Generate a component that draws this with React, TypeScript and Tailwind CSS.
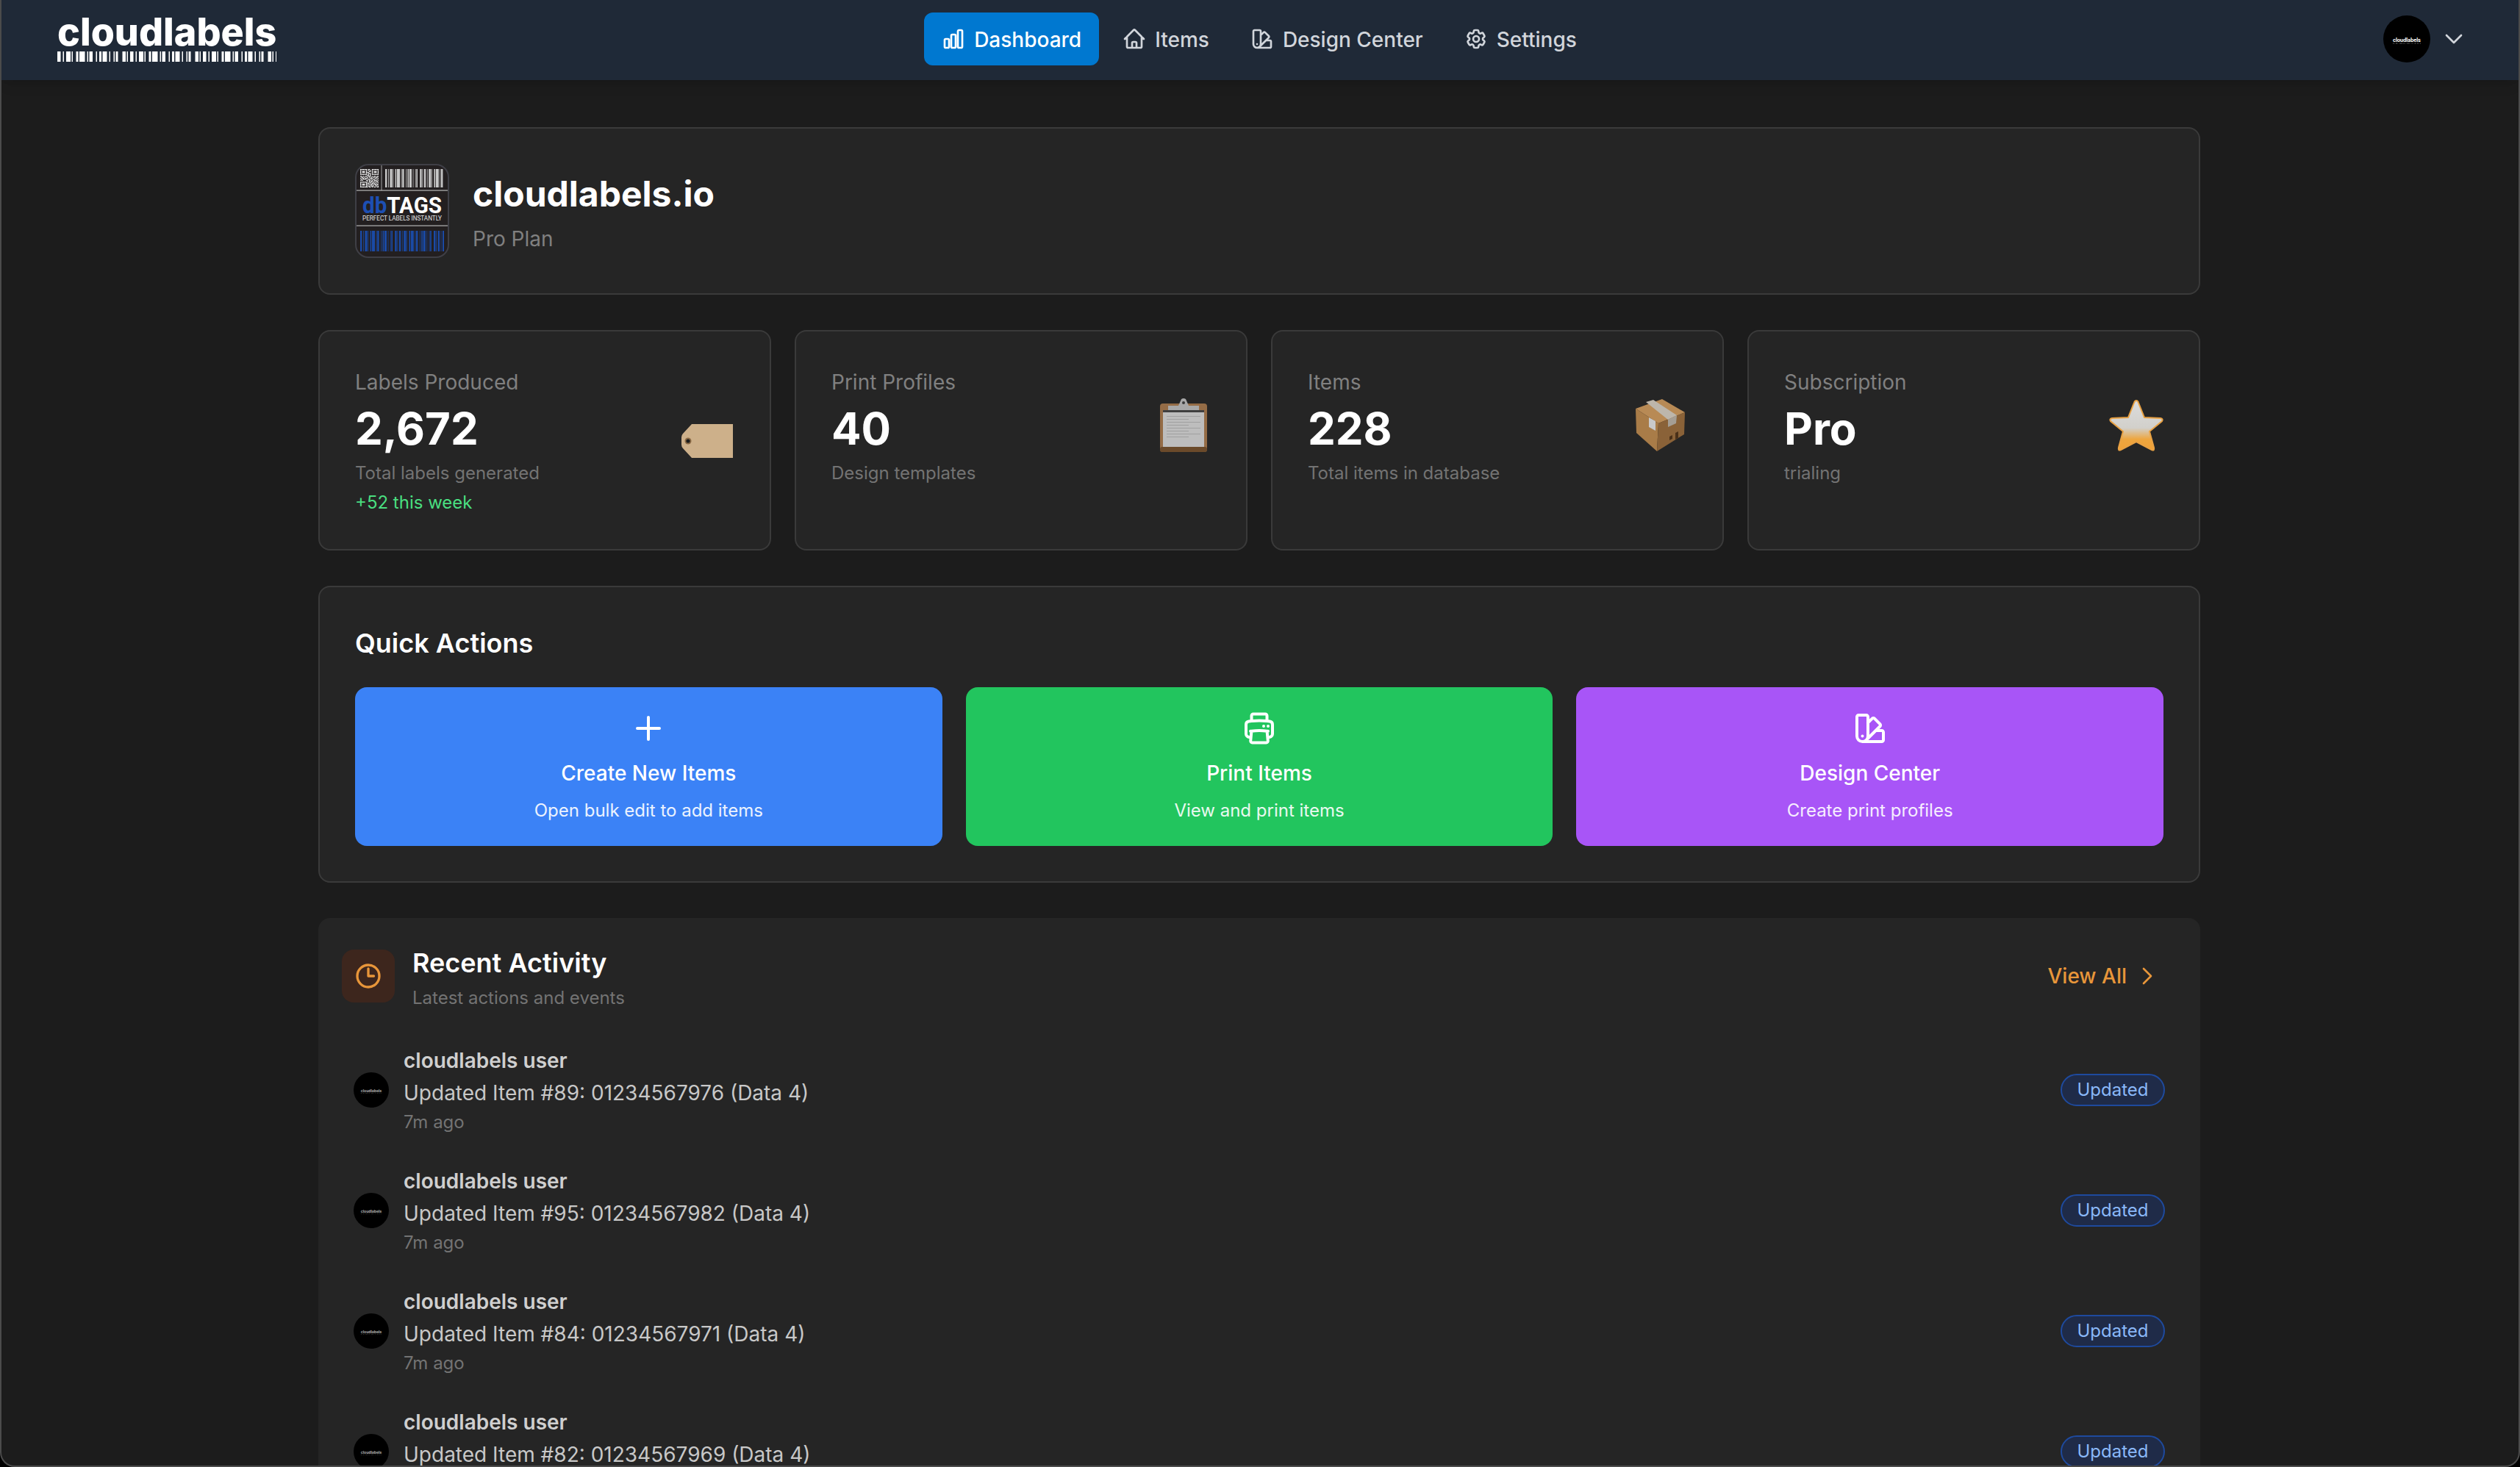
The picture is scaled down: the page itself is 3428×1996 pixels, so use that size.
import {
  HiOutlineChartBar,
  HiOutlineChevronDown,
  HiOutlineChevronRight,
  HiOutlineClock,
  HiOutlineCog6Tooth,
  HiOutlineHome,
  HiOutlinePlus,
  HiOutlinePrinter,
  HiOutlineSwatch,
} from "react-icons/hi2";

// fake barcode: repeats a fixed list of bar / gap widths across the given width
const barWidths = [3, 2, 1, 2, 4, 1, 1, 3, 2, 1, 5, 2, 1, 1, 3, 3, 1, 2, 2, 1, 4, 2, 1, 3, 1, 1, 2, 4, 3, 1, 1, 2];

const Bars = ({ x, y, width, height, fill, unit = 1 }: { x: number; y: number; width: number; height: number; fill: string; unit?: number }) => {
  const bars: { x: number; w: number }[] = [];
  let pos = 0;
  let i = 0;
  while (pos < width) {
    const w = barWidths[i % barWidths.length] * unit;
    if (i % 2 === 0) bars.push({ x: pos, w: Math.min(w, width - pos) });
    pos += w;
    i++;
  }
  return (
    <g fill={fill}>
      {bars.map((b, idx) => (
        <rect key={idx} x={x + b.x} y={y} width={b.w} height={height} />
      ))}
    </g>
  );
};

const qrRows = [
  "1111111011001111111",
  "1000001010101000001",
  "1011101001101011101",
  "1011101110001011101",
  "1000001011101000001",
  "1111111010101111111",
  "0000000110100000000",
  "1101011011101011011",
  "0110100101010110110",
  "1011011100111001101",
  "0101110011010110010",
  "1110001101101011101",
  "0000000101011010110",
  "1111111001110101011",
  "1000001110101110100",
  "1011101011011011011",
  "1011101100110101110",
  "1000001011011100101",
  "1111111101101011011",
];

const DbTagsLogo = () => (
  <svg viewBox="0 0 128 128" className="h-32 w-32 shrink-0">
    <rect x="1" y="1" width="126" height="126" rx="17" fill="#231f20" stroke="#3f3f46" strokeWidth="2" />
    {qrRows.map((row, r) =>
      row.split("").map((c, col) =>
        c === "1" ? <rect key={`${r}-${col}`} x={7 + col * 1.32} y={7 + r * 1.32} width="1.32" height="1.32" fill="#f2f2f2" /> : null
      )
    )}
    <rect x="35.5" y="2" width="1" height="34" fill="#a3a3a3" />
    <Bars x={41} y={7} width={80} height={25} fill="#c8c8c8" unit={0.8} />
    <rect x="2" y="35.5" width="124" height="1.2" fill="#b5b5b5" />
    <text x="10" y="67" fontFamily="Roboto, sans-serif" fontWeight="700" fontSize="31" textLength="108" lengthAdjust="spacingAndGlyphs">
      <tspan fill="#1d4fb3">db</tspan>
      <tspan fill="#ffffff">TAGS</tspan>
    </text>
    <text x="10" y="77" fontFamily="Roboto, sans-serif" fontSize="9.5" fill="#e5e5e5" textLength="108" lengthAdjust="spacingAndGlyphs">
      PERFECT LABELS INSTANTLY
    </text>
    <rect x="2" y="83.5" width="124" height="1.2" fill="#b5b5b5" />
    <Bars x={7} y={91} width={114} height={28} fill="#1a4aa6" unit={0.8} />
  </svg>
);

const Logo = () => (
  <div className="-ml-[2px] flex w-[298px] flex-col">
    <span className="text-[52px] leading-[44px] font-extrabold text-white">cloudlabels</span>
    <svg viewBox="0 0 298 14" className="mt-[4px] h-[14px] w-[298px]">
      <Bars x={0} y={0} width={298} height={14} fill="#ffffff" unit={1.5} />
    </svg>
  </div>
);

const Avatar = ({ size }: { size: "sm" | "lg" }) => (
  <svg viewBox="0 0 64 64" className={size === "lg" ? "h-16 w-16 shrink-0" : "h-12 w-12 shrink-0"}>
    <circle cx="32" cy="32" r="32" fill="#000000" />
    <text
      x="32"
      y="36"
      textAnchor="middle"
      fontFamily="Inter, sans-serif"
      fontWeight="700"
      fontSize="7"
      fill={size === "lg" ? "#ffffff" : "#a8a8a8"}
      textLength="38"
    >
      cloudlabels
    </text>
    <Bars x={13} y={37.5} width={38} height={1} fill={size === "lg" ? "#666666" : "#3a3a3a"} unit={0.5} />
  </svg>
);

const TagEmoji = () => (
  <svg viewBox="0 0 72 72" className="h-[72px] w-[72px] overflow-visible">
    <path d="M14 13 H70 V59 H14 L2 46 Q0 44 0 41 V31 Q0 28 2 26 Z" fill="#cdb08a" />
    <circle cx="9" cy="36" r="4.5" fill="#8a6a45" />
    <circle cx="9" cy="36" r="2.6" fill="#1c1c1c" />
  </svg>
);

const ClipboardEmoji = () => (
  <svg viewBox="0 0 72 72" className="h-[72px] w-[72px] overflow-visible">
    <rect x="3" y="5" width="64" height="66" rx="4" fill="#956c46" />
    <rect x="7" y="14" width="56" height="50" fill="#bdbdbd" />
    <rect x="7" y="14" width="56" height="3" fill="#3f3f3f" />
    <rect x="3" y="64" width="64" height="7" rx="3" fill="#6b4a2a" />
    <path d="M14 8 H28 L32 -1 Q35 -3 38 -1 L42 8 H56 V14 H14 Z" fill="#a8a8a8" />
    <circle cx="35" cy="4" r="2" fill="#3a3a3a" />
    {[22, 26, 30, 34, 38, 42, 46, 50].map((y) => (
      <rect key={y} x="12" y={y} width={y % 8 === 2 ? 30 : 46} height="1" fill="#a0a0a0" />
    ))}
  </svg>
);

const PackageEmoji = () => (
  <svg viewBox="0 0 72 72" className="h-[72px] w-[72px] overflow-visible">
    <path d="M38 -1 L69 17 L33 32 L2 12 Z" fill="#b88a55" />
    <path d="M2 12 L33 32 L31 70 L3 45 Z" fill="#a97c48" />
    <path d="M33 32 L69 17 L68 47 L31 70 Z" fill="#8a6238" />
    <path d="M16 3 L26 -0 L58 21 L46 27 Z" fill="#bdb6ab" />
    <path d="M46 27 L58 21 L57 32 L46 37 Z" fill="#a59e94" />
    <path d="M20 24 L29 29 L29 42 L20 37 Z" fill="#c9c9c9" />
    <path d="M48 50 L52 48 L52 53 L48 55 Z M56 45 L60 43 L60 52 L56 54 Z" fill="#4a3018" />
  </svg>
);

const StarEmoji = () => (
  <svg viewBox="0 0 72 72" className="h-[72px] w-[72px] overflow-visible">
    <defs>
      <linearGradient id="star-fill" x1="0" y1="0" x2="0" y2="1">
        <stop offset="0" stopColor="#dcdcdc" />
        <stop offset="0.55" stopColor="#d2d0cb" />
        <stop offset="0.78" stopColor="#eea63f" />
        <stop offset="1" stopColor="#f0a238" />
      </linearGradient>
    </defs>
    <path
      d="M35 1 Q37 1 38 4 L46 24 L68 25 Q72 26 70 29 L53 43 L59 65 Q60 70 56 68 L35 57 L14 68 Q10 70 11 65 L17 43 L0 29 Q-2 26 2 25 L24 24 L32 4 Q33 1 35 1 Z"
      fill="url(#star-fill)"
      stroke="#e9a244"
      strokeWidth="2"
    />
  </svg>
);

const navItems = [
  { label: "Dashboard", icon: HiOutlineChartBar, active: true },
  { label: "Items", icon: HiOutlineHome },
  { label: "Design Center", icon: HiOutlineSwatch },
  { label: "Settings", icon: HiOutlineCog6Tooth },
];

const stats = [
  { label: "Labels Produced", value: "2,672", sub: "Total labels generated", extra: "+52 this week", emoji: <TagEmoji /> },
  { label: "Print Profiles", value: "40", sub: "Design templates", emoji: <ClipboardEmoji /> },
  { label: "Items", value: "228", sub: "Total items in database", emoji: <PackageEmoji /> },
  { label: "Subscription", value: "Pro", sub: "trialing", emoji: <StarEmoji /> },
];

const actions = [
  { title: "Create New Items", sub: "Open bulk edit to add items", icon: HiOutlinePlus, color: "bg-[#3b82f6]" },
  { title: "Print Items", sub: "View and print items", icon: HiOutlinePrinter, color: "bg-[#22c55e]" },
  { title: "Design Center", sub: "Create print profiles", icon: HiOutlineSwatch, color: "bg-[#a855f7]" },
];

const activity = [
  "Updated Item #89: 01234567976 (Data 4)",
  "Updated Item #95: 01234567982 (Data 4)",
  "Updated Item #84: 01234567971 (Data 4)",
  "Updated Item #82: 01234567969 (Data 4)",
];

const App = () => {
  return (
    <div className="h-[1996px] overflow-hidden bg-black font-['Inter',sans-serif]">
      <div className="h-full overflow-hidden rounded-b-[20px] border-x-2 border-b-2 border-[#4b4b4b] bg-[#1c1c1c]">
        {/* Top nav */}
        <header className="relative z-10 grid h-[109px] grid-cols-[1fr_auto_1fr] items-center bg-[#1f2937] pr-[80px] pb-[3px] pl-[78px] shadow-lg">
          <Logo />
          <nav className="flex items-center gap-2">
            {navItems.map((item) => (
              <div
                key={item.label}
                className={`flex h-[72px] items-center gap-3 rounded-xl px-6 text-[28px] font-medium ${
                  item.active ? "bg-[#0078d0] text-white" : "text-[#d1d5db]"
                }`}
              >
                <item.icon className="h-8 w-8" strokeWidth={2} />
                <span className="pt-[2px]">{item.label}</span>
              </div>
            ))}
          </nav>
          <div className="-mr-2 flex items-center justify-end gap-4">
            <Avatar size="lg" />
            <HiOutlineChevronDown className="h-8 w-8 text-[#d1d5db]" strokeWidth={2} />
          </div>
        </header>

        <main className="ml-[431px] flex w-[2560px] flex-col gap-12 pt-16">
          {/* Tenant header */}
          <section className="flex items-center gap-8 rounded-2xl border-2 border-[#3a3a3a] bg-[#252525] p-12">
            <DbTagsLogo />
            <div>
              <h1 className="pt-[3px] text-5xl leading-[64px] font-bold text-white">cloudlabels.io</h1>
              <p className="mt-[9px] text-[28px] leading-10 text-[#808080]">Pro Plan</p>
            </div>
          </section>

          {/* Stat cards */}
          <section className="grid grid-cols-4 gap-8">
            {stats.map((stat) => (
              <div key={stat.label} className="rounded-2xl border-2 border-[#3a3a3a] bg-[#252525] px-12 pt-12 pb-[47px]">
                <div className="flex items-center justify-between">
                  <div>
                    <p className="text-[28px] leading-[42px] text-[#808080]">{stat.label}</p>
                    <p className="mt-[6px] text-6xl leading-[72px] font-bold text-white">{stat.value}</p>
                    <p className="mt-[9px] text-2xl leading-8 text-[#737373]">{stat.sub}</p>
                    {stat.extra && <p className="mt-2 text-2xl leading-8 text-[#4ade80]">{stat.extra}</p>}
                  </div>
                  {stat.emoji}
                </div>
              </div>
            ))}
          </section>

          {/* Quick actions */}
          <section className="rounded-2xl border-2 border-[#3a3a3a] bg-[#252525] p-12">
            <h2 className="mb-8 text-[36px] leading-14 font-semibold text-white">Quick Actions</h2>
            <div className="grid grid-cols-3 gap-8">
              {actions.map((action) => (
                <div key={action.title} className={`flex h-[216px] flex-col items-center rounded-2xl p-8 text-white ${action.color}`}>
                  <action.icon className="h-12 w-12" strokeWidth={2} />
                  <p className="mt-[17px] text-[28px] leading-10 font-medium">{action.title}</p>
                  <p className="mt-[15px] text-2xl leading-8 text-white/90">{action.sub}</p>
                </div>
              ))}
            </div>
          </section>

          {/* Recent activity */}
          <section className="rounded-2xl bg-[#252525] px-8 pt-[33px]">
            <div className="mb-[27px] flex items-center justify-between">
              <div className="flex items-center gap-6">
                <div className="flex h-[72px] w-[72px] items-center justify-center rounded-2xl bg-[#3d261d]">
                  <HiOutlineClock className="h-10 w-10 text-[#e8963a]" strokeWidth={2} />
                </div>
                <div>
                  <h2 className="text-4xl leading-14 font-semibold text-white">Recent Activity</h2>
                  <p className="mt-1 text-2xl leading-8 text-[#737373]">Latest actions and events</p>
                </div>
              </div>
              <div className="flex items-center gap-3 px-6 text-[28px] font-medium text-[#e8963a]">
                <span>View All</span>
                <HiOutlineChevronRight className="h-8 w-8" strokeWidth={2} />
              </div>
            </div>
            {activity.map((message) => (
              <div key={message} className="flex items-center justify-between px-4 py-[22px]">
                <div className="flex items-center gap-5">
                  <Avatar size="sm" />
                  <div>
                    <p className="text-[28px] leading-10 font-semibold text-[#cfcfcf]">cloudlabels user</p>
                    <p className="mt-1 text-[28px] leading-10 text-[#c8c8c8]">{message}</p>
                    <p className="mt-1 text-2xl leading-8 text-[#737373]">7m ago</p>
                  </div>
                </div>
                <span className="flex h-11 w-[142px] items-center justify-center rounded-full border-2 border-[#1e4a9e] bg-[#1f2b48] text-2xl text-[#8ab8f8]">
                  Updated
                </span>
              </div>
            ))}
          </section>
        </main>
      </div>
    </div>
  );
};

export default App;
